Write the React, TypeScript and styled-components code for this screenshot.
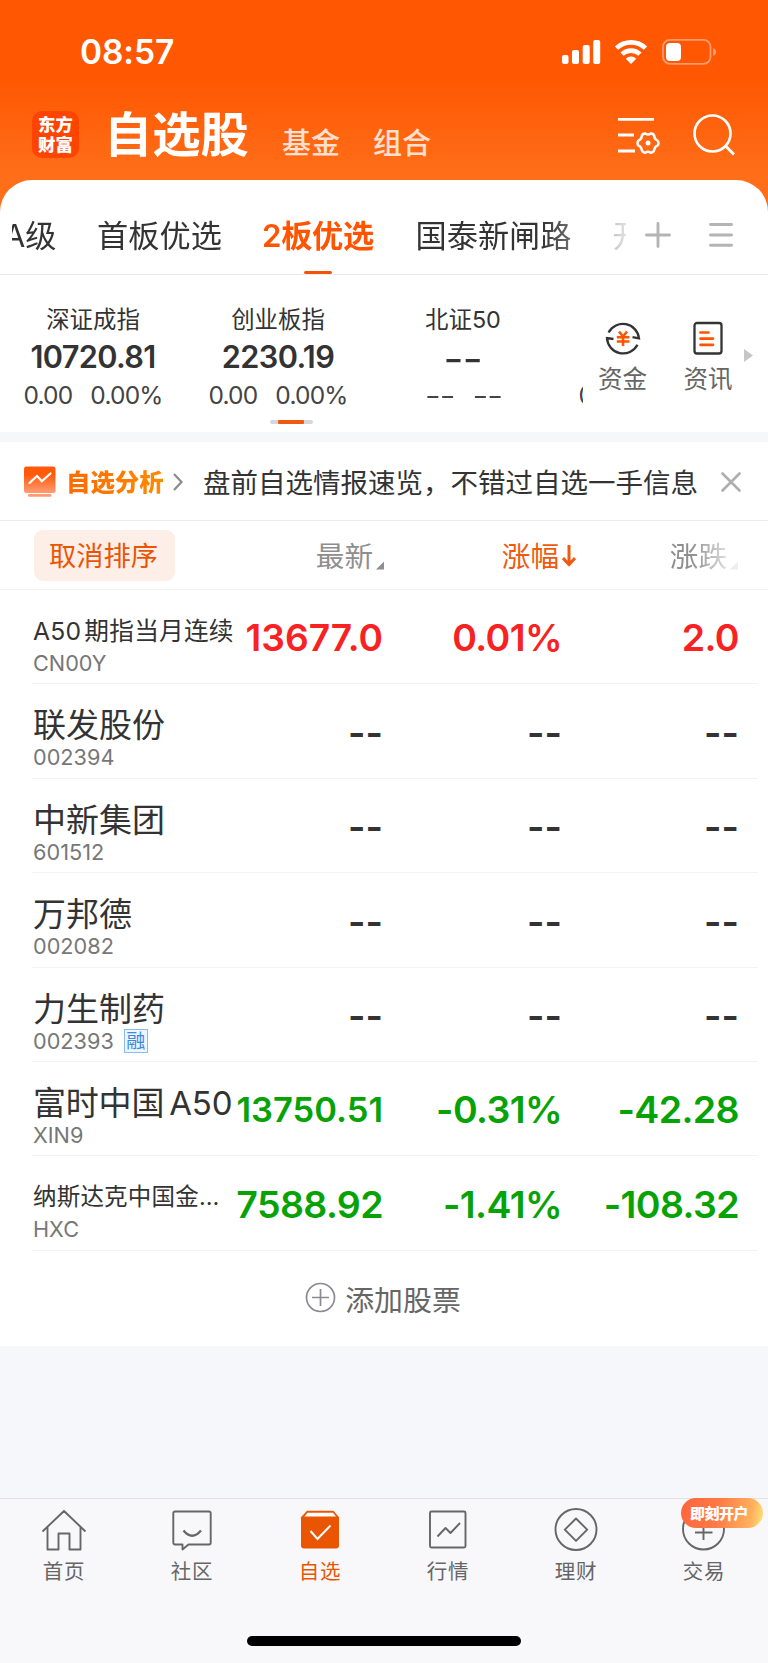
import React from "react";
import styled, { createGlobalStyle } from "styled-components";

const Global = createGlobalStyle`
  * { box-sizing: border-box; }
  body {
    margin: 0;
    background: #f6f7fa;
    font-family: Inter, "Noto Sans CJK SC", sans-serif;
    font-weight: 370;
    color: #333;
  }
  svg { display: block; flex: none; }
`;

const Screen = styled.div`
  width: 768px;
  height: 1663px;
  display: flex;
  flex-direction: column;
  overflow: hidden;
  background: #f6f7fa;
  white-space: nowrap;
`;

const Hero = styled.header`
  height: 220px;
  margin-bottom: -40px;
  flex: none;
  background: linear-gradient(#ff5702 0, #ff5702 78px, #ff6d18 170px, #ff6f1a 220px);
  color: #fff;
`;

const StatusBar = styled.div`
  height: 103px;
  padding: 0 51px 0 80px;
  display: flex;
  align-items: center;
  justify-content: space-between;
`;

const Clock = styled.span`
  font-size: 33.5px;
  font-weight: 570;
  line-height: 40px;
  letter-spacing: -0.1px;
`;

const TitleBar = styled.div`
  height: 68px;
  padding-left: 32px;
  display: flex;
  align-items: center;
`;

const Logo = styled.div`
  width: 47px;
  height: 47px;
  margin-top: -5px;
  padding-top: 4px;
  border-radius: 10px;
  background: #ff4400;
  font-size: 17.4px;
  font-weight: 900;
  line-height: 19.5px;
  text-align: center;
`;

const Title = styled.h1`
  margin: -4px 0 0 25px;
  width: 150px;
  font-size: 48.3px;
  font-weight: 600;
  line-height: 60px;
`;

const SubTab = styled.span<{ $gap: number }>`
  margin: 14px 0 0 ${(p) => p.$gap}px;
  width: 58px;
  font-size: 29px;
  font-weight: 500;
  line-height: 36px;
  color: #ffe0d0;
`;

const HeroTools = styled.div`
  margin: -5px 33px 0 auto;
  display: flex;
  align-items: center;
  gap: 33px;
`;

const Sheet = styled.main`
  height: 1166px;
  flex: none;
  border-radius: 32px 32px 0 0;
  background: #fff;
`;

const GroupBar = styled.nav`
  height: 95px;
  padding: 0 35px 0 12px;
  display: flex;
  align-items: stretch;
  border-bottom: 1px solid #ebebed;
`;

const GroupScroller = styled.div`
  width: 614px;
  display: flex;
  overflow: hidden;
  mask-image: linear-gradient(90deg, #000 530px, rgba(0, 0, 0, 0.15) 614px);
`;

const Group = styled.div<{ $w: number; $active?: boolean; $shift?: number }>`
  width: ${(p) => p.$w}px;
  margin-left: ${(p) => p.$shift ?? 0}px;
  flex: none;
  display: flex;
  flex-direction: column;
  align-items: center;
  padding-top: 36px;
  font-size: 31.2px;
  line-height: 40px;
  font-weight: ${(p) => (p.$active ? 600 : "inherit")};
  letter-spacing: ${(p) => (p.$active ? -0.3 : 0)}px;
  color: ${(p) => (p.$active ? "#ff5500" : "#333")};
  &::after {
    content: "";
    width: 28px;
    height: 4px;
    margin-top: 15px;
    border-radius: 2px;
    background: ${(p) => (p.$active ? "#f55208" : "transparent")};
  }
`;

const GroupTools = styled.div`
  margin-left: auto;
  margin-top: 15px;
  display: flex;
  align-items: center;
  gap: 38px;
  height: 80px;
`;

const IndexBar = styled.section`
  height: 157px;
  display: flex;
`;

const IndexScroller = styled.div`
  width: 583px;
  flex: none;
  padding-left: 0;
  display: flex;
  flex-direction: column;
  height: 157px;
  overflow: hidden;
`;

const IndexStrip = styled.div`
  display: flex;
  flex: none;
  height: 145px;
`;

const IndexCard = styled.div`
  width: 185px;
  flex: none;
  padding: 30px 0 0 1px;
  display: flex;
  flex-direction: column;
  align-items: center;
`;

const IndexName = styled.div`
  height: 30px;
  font-size: 23.4px;
  line-height: 30px;
`;

const IndexValue = styled.div<{ $flat?: boolean }>`
  height: 38px;
  margin-top: 3px;
  font-size: 30.7px;
  font-weight: 600;
  line-height: ${(p) => (p.$flat ? 41 : 38)}px;
  letter-spacing: -0.65px;
  transform: ${(p) => (p.$flat ? "scaleX(1.4)" : "none")};
`;

const IndexChange = styled.div<{ $flat?: boolean }>`
  height: 30px;
  margin-top: 3px;
  display: flex;
  gap: ${(p) => (p.$flat ? 13 : 18)}px;
  font-size: 24.5px;
  line-height: ${(p) => (p.$flat ? 34 : 32)}px;
  letter-spacing: -0.8px;
  color: #444;
  transform: ${(p) => (p.$flat ? "scaleX(1.4)" : "none")};
`;

const Pager = styled.div`
  width: 43px;
  height: 4px;
  margin-left: 270px;
  padding: 0 9px 0 8px;
  border-radius: 2px;
  background: #d6d7de;
  &::before {
    content: "";
    display: block;
    height: 4px;
    border-radius: 1px;
    background: #f05a10;
  }
`;

const Shortcut = styled.div<{ $w: number; $gap?: number }>`
  width: ${(p) => p.$w}px;
  margin-left: ${(p) => p.$gap ?? 0}px;
  padding-top: 45px;
  display: flex;
  flex-direction: column;
  align-items: center;
  gap: 7px;
  font-size: 24.5px;
  line-height: 32px;
  color: #666;
`;

const MoreArrow = styled.div`
  margin-top: 74px;
  width: 9px;
  height: 13px;
  background: #c6c6c8;
  clip-path: polygon(0 0, 100% 50%, 0 100%);
`;

const Divider = styled.div`
  height: 10px;
  background: #f6f7f9;
`;

const Notice = styled.section`
  height: 79px;
  padding: 2px 27px 0 24px;
  display: flex;
  align-items: center;
  border-bottom: 1px solid #ebebed;
`;

const NoticeTag = styled.strong`
  width: 98px;
  margin: 0 9px 0 10px;
  font-size: 24.4px;
  font-weight: 800;
  line-height: 36px;
  background: linear-gradient(90deg, #ff6a00, #ff8a00);
  background-clip: text;
  color: transparent;
`;

const NoticeText = styled.span`
  width: 496px;
  margin: 1px auto 0 20px;
  font-size: 27.5px;
  line-height: 36px;
`;

const TableHead = styled.div`
  height: 69px;
  display: flex;
  align-items: center;
  padding-left: 34px;
  border-bottom: 1px solid #f2f2f4;
`;

const ResetSort = styled.button`
  width: 141px;
  height: 51px;
  padding: 0 2px 0 0;
  border: 0;
  border-radius: 9px;
  background: #fdeee7;
  color: #ea5504;
  font: 370 27.3px/53px Inter, "Noto Sans CJK SC", sans-serif;
`;

const HeadCell = styled.div<{ $w: number; $active?: boolean; $fade?: boolean }>`
  width: ${(p) => p.$w}px;
  padding-top: 3px;
  display: flex;
  justify-content: flex-end;
  align-items: center;
  gap: 3px;
  font-size: 28.6px;
  line-height: 36px;
  color: ${(p) => (p.$active ? "#f05a10" : "#8e8e8e")};
  mask-image: ${(p) => (p.$fade ? "linear-gradient(90deg, #000 115px, rgba(0,0,0,.15) 158px)" : "none")};
`;

const Corner = styled.i`
  width: 8px;
  height: 8px;
  margin-top: 18px;
  background: #8e8e8e;
  clip-path: polygon(100% 0, 100% 100%, 0 100%);
`;

const Row = styled.div`
  height: 94.4px;
  margin: 0 10px 0 32px;
  padding-left: 1px;
  display: flex;
  border-bottom: 1px solid #f3f3f5;
`;

const Stock = styled.div`
  width: 204px;
  padding-top: 21px;
`;

const StockName = styled.div<{ $size: number; $track: number }>`
  height: 39px;
  font-size: ${(p) => p.$size}px;
  letter-spacing: ${(p) => p.$track}px;
  word-spacing: -4px;
  line-height: 40px;
`;

const StockCode = styled.div`
  height: 26px;
  display: flex;
  align-items: center;
  gap: 10px;
  font-size: 21.7px;
  font-weight: 400;
  line-height: 26px;
  color: #777;
`;

const MarginTag = styled.span`
  width: 24px;
  height: 24px;
  border: 1px solid #8bbcf0;
  background: #eef5fd;
  color: #3a8ae0;
  font-size: 19px;
  letter-spacing: 0;
  line-height: 23px;
  text-align: center;
  display: flex;
  justify-content: center;
`;

const tones = { up: "#f82223", down: "#06a206", flat: "#333" };

const Figure = styled.div<{ $w: number; $tone: keyof typeof tones; $size?: number }>`
  width: ${(p) => p.$w}px;
  padding-top: ${(p) => (p.$tone === "flat" ? 3 : 2)}px;
  display: flex;
  justify-content: flex-end;
  align-items: center;
  font-size: ${(p) => p.$size ?? 37.5}px;
  font-weight: 600;
  letter-spacing: ${(p) => (p.$size || p.$tone === "flat" ? 0 : -0.6)}px;
  color: ${(p) => tones[p.$tone]};
`;

const AddStock = styled.div`
  height: 95px;
  padding: 0 2px 1px 0;
  display: flex;
  align-items: center;
  justify-content: center;
  gap: 9px;
  font-size: 28.9px;
  color: #666;
`;

const TabBar = styled.footer`
  height: 165px;
  margin-top: auto;
  flex: none;
  border-top: 1px solid #e2e2e5;
  background: #f8f8fb;
`;

const Tabs = styled.div`
  display: flex;
  height: 137px;
`;

const Tab = styled.div<{ $active?: boolean }>`
  position: relative;
  width: 128px;
  padding-top: 8px;
  display: flex;
  flex-direction: column;
  align-items: center;
  font-size: 20.5px;
  line-height: 28px;
  letter-spacing: 0.8px;
  color: ${(p) => (p.$active ? "#ea5504" : "#666")};
  svg { margin-bottom: 7px; }
`;

const Promo = styled.span`
  position: absolute;
  left: 41px;
  top: -1px;
  width: 82px;
  height: 30px;
  padding-left: 9px;
  border-radius: 15px;
  background: linear-gradient(100deg, #ff653c 0, #ff7a45 45%, #ffb25e 85%, #ffe77e 100%);
  color: #fff;
  font-size: 15px;
  font-weight: 900;
  letter-spacing: -0.5px;
  line-height: 31px;
`;

const HomeBar = styled.div`
  width: 274px;
  height: 10px;
  margin: 0 auto;
  border-radius: 5px;
  background: #000;
`;

const StatusIcons = () => (
  <svg width="156" height="28" viewBox="561 37 156 28" fill="#fff">
    <rect x="562" y="54" width="6.5" height="9" rx="2" />
    <rect x="572" y="49" width="7" height="14" rx="2" />
    <rect x="582.7" y="44" width="7" height="19" rx="2" />
    <rect x="593.2" y="39" width="7" height="24" rx="2" />
    <g fill="none" stroke="#fff" strokeWidth="4.6">
      <path d="M616.5 47.2a21 21 0 0 1 29 0" />
      <path d="M622 53.2a13 13 0 0 1 18 0" />
    </g>
    <path d="M631 63l-5.2-5.3a7.5 7.5 0 0 1 10.4 0z" />
    <rect x="663" y="38.8" width="47.5" height="24" rx="7" fill="none" stroke="#ff9c6b" strokeWidth="1.8" />
    <rect x="666" y="42" width="15" height="18" rx="4" />
    <path d="M713 47c4 1.200 4 6.800 0 8z" fill="#ff9c6b" />
  </svg>
);

const FilterIcon = () => (
  <svg width="43" height="44" viewBox="617 112 43 44" fill="none" stroke="#fff" strokeWidth="2.8">
    <path d="M618 118.300h36M618 134h16M618 150h17" />
    <path
      d="M645.300 132.600q2.700 1.800 5.400 0q3.500 -0.200 3.800 3.900q0.800 2.300 3.300 3.300q1.400 2.400 0 4.600q-2.500 1 -3.300 3.200q-0.400 4 -3.800 4.100q-2.700 -1.900 -5.400 0q-3.400 -0.100 -3.800 -4.100q-0.800 -2.200 -3.300 -3.200q-1.400 -2.200 0 -4.600q2.500 -1 3.300 -3.300q0.400 -4.100 3.800 -3.900z"
      strokeWidth="2.500"
      strokeLinejoin="round"
    />
    <circle cx="648" cy="142" r="2.500" fill="#fff" stroke="none" />
  </svg>
);

const SearchIcon = () => (
  <svg width="42" height="44" viewBox="692 112 42 44" fill="none" stroke="#fff" strokeWidth="2.600">
    <circle cx="711.500" cy="132.500" r="18" />
    <path d="M724 144.500l9 9" strokeWidth="3" />
  </svg>
);

const PlusIcon = () => (
  <svg width="26" height="26" viewBox="0 0 26 26" stroke="#b4b4b6" strokeWidth="2.900" strokeLinecap="round">
    <path d="M13 1.500v23M1.500 13h23" />
  </svg>
);

const MenuIcon = () => (
  <svg width="24" height="26" viewBox="0 0 24 26" stroke="#b4b4b6" strokeWidth="2.900" strokeLinecap="round">
    <path d="M1.500 2.500h21M1.500 13h21M1.500 23.300h21" />
  </svg>
);

const FundsIcon = () => (
  <svg width="36" height="36" viewBox="0 0 36 36" fill="none" stroke="#333" strokeWidth="2.300">
    <path d="M3.600 12.500A16.200 16.200 0 0 1 34 18.300l-6.500-1.200" />
    <path d="M32.500 24.800A16.200 16.200 0 0 1 2 18l6.500 1" />
    <path d="M14 11.500l4 5 4-5M11.800 17.300h12.600M11.800 21.500h12.600M18 16v10" stroke="#ff5500" strokeWidth="2.600" />
  </svg>
);

const NewsIcon = () => (
  <svg width="36" height="36" viewBox="0 0 36 36" fill="none" stroke="#333" strokeWidth="2.300">
    <rect x="4.500" y="3" width="27" height="30.500" rx="2.500" />
    <path d="M10.500 12.500h8M10.500 18.600h12.500M10.500 24.800h12.500" stroke="#ff5500" strokeWidth="2.700" strokeLinecap="round" />
  </svg>
);

const AnalysisIcon = () => (
  <svg width="32" height="32" viewBox="0 0 32 32">
    <defs>
      <linearGradient id="board" x1="0" y1="0" x2="0" y2="1">
        <stop offset="0.300" stopColor="#ff5a0a" />
        <stop offset="1" stopColor="#ff9c74" />
      </linearGradient>
    </defs>
    <rect width="31.500" height="26.500" y="0.500" rx="2.500" fill="url(#board)" />
    <rect x="4" y="28" width="23.500" height="2.700" rx="1" fill="#ff9c74" />
    <path d="M5.500 17l7.500-7 4.800 5.200L26.500 7.500" fill="none" stroke="#fff" strokeWidth="2.200" strokeLinecap="round" />
  </svg>
);

const HomeIcon = () => (
  <svg width="46" height="44" viewBox="0 0 46 44" fill="none" stroke="#666" strokeWidth="1.900" strokeLinejoin="round">
    <path d="M1.500 24.500L23 4l21.500 20.500M6.500 20v22.500H17.500V26.500h11v16H39.500V20" />
  </svg>
);

const CommunityIcon = () => (
  <svg width="46" height="44" viewBox="0 0 46 44" fill="none" stroke="#666" strokeWidth="1.900" strokeLinejoin="round">
    <path d="M6 4.500h34a1.700 1.700 0 0 1 1.700 1.700v29.600a1.700 1.700 0 0 1-1.700 1.700H19.500l-6 5v-5H6a1.700 1.700 0 0 1-1.700-1.700V6.200A1.700 1.700 0 0 1 6 4.500z" />
    <path d="M14.500 23.500q8.500 10.500 17.500 0" strokeWidth="2.300" />
  </svg>
);

const WatchIcon = () => (
  <svg width="46" height="44" viewBox="0 0 46 44">
    <path d="M10 3.800h26.500l5.500 6.500v28.200a3 3 0 0 1-3 3h-32a3 3 0 0 1-3-3V10.300z" fill="#ea5504" />
    <path d="M10.500 5.800h25.500l3 3.700h-31.500z" fill="#fff" />
    <path d="M13.500 24l7 8L33.500 18.500" fill="none" stroke="#fff" strokeWidth="2" />
  </svg>
);

const MarketIcon = () => (
  <svg width="46" height="44" viewBox="0 0 46 44" fill="none" stroke="#666" strokeWidth="1.900" strokeLinejoin="round">
    <rect x="5" y="4.500" width="35.500" height="36" rx="1.500" />
    <path d="M12.500 29.500l8-8.500 5 5L35 16" />
  </svg>
);

const WealthIcon = () => (
  <svg width="46" height="44" viewBox="0 0 46 44" fill="none" stroke="#666" strokeWidth="1.900" strokeLinejoin="round">
    <circle cx="23" cy="22.500" r="20.500" />
    <path d="M23 11.500l11.200 11.200L23 33.900 11.800 22.700z" />
  </svg>
);

const TradeIcon = () => (
  <svg width="46" height="44" viewBox="0 0 46 44" fill="none" stroke="#666" strokeWidth="1.900">
    <circle cx="22.500" cy="22" r="20.500" />
    <path d="M22.500 16v17M14 25.500h17.500" />
  </svg>
);

const indices = [
  { name: "深证成指", value: "10720.81", diff: "0.00", pct: "0.00%" },
  { name: "创业板指", value: "2230.19", diff: "0.00", pct: "0.00%" },
  { name: "北证50", value: "--", diff: "--", pct: "--" },
  { name: "", value: "", diff: "0.00", pct: "0.00%" },
];

type StockItem = {
  name: string;
  code: string;
  size?: number;
  track?: number;
  tag?: string;
  tone: keyof typeof tones;
  values: string[];
  priceSize?: number;
};

const blank = ["--", "--", "--"];

const stocks: StockItem[] = [
  { name: "A50 期指当月连续", code: "CN00Y", size: 24.700, track: 0.2, tone: "up", values: ["13677.0", "0.01%", "2.0"], priceSize: 37.2 },
  { name: "联发股份", code: "002394", tone: "flat", values: blank },
  { name: "中新集团", code: "601512", tone: "flat", values: blank },
  { name: "万邦德", code: "002082", tone: "flat", values: blank },
  { name: "力生制药", code: "002393", tag: "融", tone: "flat", values: blank },
  { name: "富时中国 A50", code: "XIN9", track: -0.2, tone: "down", values: ["13750.51", "-0.31%", "-42.28"], priceSize: 34.5 },
  { name: "纳斯达克中国金…", code: "HXC", size: 23.500, track: 0.2, tone: "down", values: ["7588.92", "-1.41%", "-108.32"] },
];

export default function App() {
  return (
    <Screen>
      <Global />
      <Hero>
        <StatusBar>
          <Clock>08:57</Clock>
          <StatusIcons />
        </StatusBar>
        <TitleBar>
          <Logo>东方<br />财富</Logo>
          <Title>自选股</Title>
          <SubTab $gap={28}>基金</SubTab>
          <SubTab $gap={33}>组合</SubTab>
          <HeroTools>
            <FilterIcon />
            <SearchIcon />
          </HeroTools>
        </TitleBar>
      </Hero>

      <Sheet>
        <GroupBar>
          <GroupScroller>
            <Group $w={54} $shift={-9}>A级</Group>
            <Group $w={125} $shift={40}>首板优选</Group>
            <Group $w={114} $shift={39} $active>2板优选</Group>
            <Group $w={157} $shift={40}>国泰新闸路</Group>
            <Group $w={32} $shift={40}>开</Group>
          </GroupScroller>
          <GroupTools>
            <PlusIcon />
            <MenuIcon />
          </GroupTools>
        </GroupBar>

        <IndexBar>
          <IndexScroller>
            <IndexStrip>
              {indices.map((item, i) => (
                <IndexCard key={i}>
                  <IndexName>{item.name}</IndexName>
                  <IndexValue $flat={item.value === "--"}>{item.value}</IndexValue>
                  <IndexChange $flat={item.value === "--"}>
                    <span>{item.diff}</span>
                    <span>{item.pct}</span>
                  </IndexChange>
                </IndexCard>
              ))}
            </IndexStrip>
            <Pager />
          </IndexScroller>
          <Shortcut $w={79}><FundsIcon />资金</Shortcut>
          <Shortcut $w={72} $gap={10}><NewsIcon />资讯</Shortcut>
          <MoreArrow />
        </IndexBar>

        <Divider />

        <Notice>
          <AnalysisIcon />
          <NoticeTag>自选分析</NoticeTag>
          <svg width="10" height="18" viewBox="0 0 10 18" fill="none" stroke="#8c8c8c" strokeWidth="2.200">
            <path d="M1 1l7.500 8L1 17" />
          </svg>
          <NoticeText>盘前自选情报速览，不错过自选一手信息</NoticeText>
          <svg width="20" height="20" viewBox="0 0 20 20" stroke="#aeaeb0" strokeWidth="2.600" strokeLinecap="round">
            <path d="M1.500 1.500l17 17M18.500 1.500l-17 17" />
          </svg>
        </Notice>

        <TableHead>
          <ResetSort>取消排序</ResetSort>
          <HeadCell $w={209}>最新<Corner /></HeadCell>
          <HeadCell $w={192} $active>
            涨幅
            <svg width="14" height="24" viewBox="0 0 14 24" fill="none" stroke="#f05a10" strokeWidth="3">
              <path d="M7 0v19M1 13l6 6.500 6-6.500" />
            </svg>
          </HeadCell>
          <HeadCell $w={162} $fade>涨跌<Corner /></HeadCell>
        </TableHead>

        {stocks.map((s) => (
          <Row key={s.code}>
            <Stock>
              <StockName $size={s.size ?? 33} $track={s.track ?? 0}>{s.name}</StockName>
              <StockCode>
                {s.code}
                {s.tag && <MarginTag>{s.tag}</MarginTag>}
              </StockCode>
            </Stock>
            <Figure $w={146} $tone={s.tone} $size={s.priceSize}>{s.values[0]}</Figure>
            <Figure $w={179} $tone={s.tone}>{s.values[1]}</Figure>
            <Figure $w={177} $tone={s.tone}>{s.values[2]}</Figure>
          </Row>
        ))}

        <AddStock>
          <svg width="31" height="31" viewBox="0 0 31 31" fill="none" stroke="#8a8a90" strokeWidth="1.700">
            <circle cx="15.500" cy="15.500" r="14" />
            <path d="M15.500 7v17M7 15.500h17" />
          </svg>
          添加股票
        </AddStock>
      </Sheet>

      <TabBar>
        <Tabs>
          <Tab><HomeIcon />首页</Tab>
          <Tab><CommunityIcon />社区</Tab>
          <Tab $active><WatchIcon />自选</Tab>
          <Tab><MarketIcon />行情</Tab>
          <Tab><WealthIcon />理财</Tab>
          <Tab><TradeIcon />交易<Promo>即刻开户</Promo></Tab>
        </Tabs>
        <HomeBar />
      </TabBar>
    </Screen>
  );
}
